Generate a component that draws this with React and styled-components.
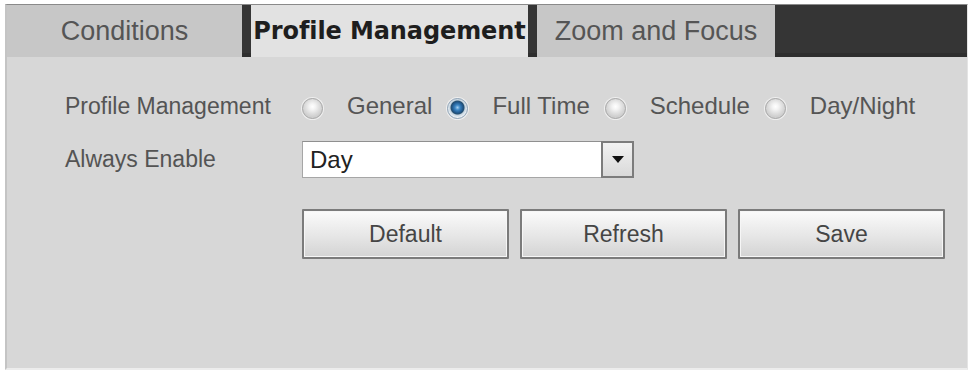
import React from "react";
import styled, { createGlobalStyle } from "styled-components";

const GlobalStyle = createGlobalStyle`
	html, body {
		margin: 0;
		padding: 0;
		background: #ffffff;
	}
	body {
		font-family: "Liberation Sans", Arial, sans-serif;
	}
`;

const Page = styled.div`
	width: 973px;
	height: 373px;
	padding: 4px 5px 3px 5px;
	box-sizing: border-box;
`;

const Panel = styled.div`
	height: 366px;
	display: flex;
	flex-direction: column;
	background: #d7d7d7;
	border-top: 1px solid #8a8a8a;
	border-left: 2px solid #c4c4c4;
	border-right: 1px solid #e4e4e4;
	border-bottom: 2px solid #ececec;
	box-sizing: border-box;
`;

const TabBar = styled.div`
	display: flex;
	gap: 9px;
	height: 52px;
	background: #353535;
	box-shadow: inset 0 -4px 0 #2e2e2e;
`;

const Tab = styled.div`
	width: ${(p) => p.$width}px;
	flex: none;
	display: flex;
	align-items: center;
	justify-content: center;
	white-space: nowrap;
	background: ${(p) => (p.$active ? "#e2e2e2" : "#c7c7c7")};
	color: ${(p) => (p.$active ? "#1e1e1e" : "#555555")};
	font-family: ${(p) =>
		p.$active
			? '"DejaVu Sans", Verdana, sans-serif'
			: '"Liberation Sans", Arial, sans-serif'};
	font-weight: ${(p) => (p.$active ? 700 : 400)};
	font-size: ${(p) => (p.$active ? 24 : 27)}px;
	letter-spacing: ${(p) => (p.$active ? "-0.1px" : "0")};
`;

const Body = styled.div`
	flex: 1;
	padding: 30px 0 0 58px;
	display: flex;
	flex-direction: column;
`;

const Row = styled.div`
	display: flex;
	align-items: center;
	height: ${(p) => p.$height}px;
	margin-bottom: ${(p) => p.$gap || 0}px;
`;

const Label = styled.div`
	width: 237px;
	flex: none;
	font-size: 23px;
	color: #545454;
`;

const RadioGroup = styled.div`
	display: flex;
	align-items: center;
`;

const Radio = styled.span`
	width: 21px;
	height: 21px;
	box-sizing: border-box;
	border-radius: 50%;
	margin: 5px 24px 0 0;
	border: 1.5px solid ${(p) => (p.$checked ? "#8fa4b8" : "#a9a9a9")};
	background: ${(p) =>
		p.$checked
			? "radial-gradient(circle at 50% 45%, #a6d0f0 0, #3c86c4 2.5px, #1f5588 5.5px, #27506f 6.5px, #c3d2de 7.5px, #eef2f5 10px)"
			: "radial-gradient(circle at 50% 40%, #ffffff 0, #f4f4f4 3px, #dedede 7px, #cfcfcf 10px)"};
	box-shadow: 0 0 0 1px rgba(255, 255, 255, 0.6);
`;

const RadioText = styled.span`
	font-size: 24px;
	color: #555555;
	margin-right: 15px;
	white-space: nowrap;
`;

const Select = styled.div`
	width: 332px;
	height: 37px;
	box-sizing: border-box;
	display: flex;
	background: #ffffff;
	border: 1px solid #a6a6a6;
	border-top-color: #8f8f8f;
`;

const SelectValue = styled.div`
	flex: 1;
	display: flex;
	align-items: center;
	padding-left: 7px;
	font-size: 24px;
	color: #222222;
`;

const SelectArrow = styled.div`
	width: 33px;
	flex: none;
	display: flex;
	align-items: center;
	justify-content: center;
	box-sizing: border-box;
	border: 2px solid #7c7c7c;
	margin: -1px -1px -1px 0;
	background: linear-gradient(#f2f2f2, #d9d9d9);

	&::after {
		content: "";
		border-left: 6px solid transparent;
		border-right: 6px solid transparent;
		border-top: 7px solid #111111;
	}
`;

const Buttons = styled.div`
	display: flex;
	gap: 11px;
	margin-left: 237px;
`;

const Button = styled.button`
	width: 207px;
	height: 50px;
	box-sizing: border-box;
	border: 2px solid #7b7b7b;
	border-radius: 1px;
	background: linear-gradient(#fbfbfb, #e6e6e6 55%, #d3d3d3);
	box-shadow: inset 0 0 0 1px #f6f6f6;
	font-family: "Liberation Sans", Arial, sans-serif;
	font-size: 23px;
	color: #454545;
	padding: 0;
`;

const modes = [
	{ label: "General", checked: false },
	{ label: "Full Time", checked: true },
	{ label: "Schedule", checked: false },
	{ label: "Day/Night", checked: false },
];

export default function App() {
	return (
		<>
			<GlobalStyle />
			<Page>
				<Panel>
					<TabBar>
						<Tab $width={235}>Conditions</Tab>
						<Tab $width={277} $active>
							Profile Management
						</Tab>
						<Tab $width={238}>Zoom and Focus</Tab>
					</TabBar>
					<Body>
						<Row $height={38} $gap={16}>
							<Label>Profile Management</Label>
							<RadioGroup>
								{modes.map((m) => (
									<React.Fragment key={m.label}>
										<Radio $checked={m.checked} />
										<RadioText>{m.label}</RadioText>
									</React.Fragment>
								))}
							</RadioGroup>
						</Row>
						<Row $height={37} $gap={31}>
							<Label>Always Enable</Label>
							<Select>
								<SelectValue>Day</SelectValue>
								<SelectArrow />
							</Select>
						</Row>
						<Buttons>
							<Button>Default</Button>
							<Button>Refresh</Button>
							<Button>Save</Button>
						</Buttons>
					</Body>
				</Panel>
			</Page>
		</>
	);
}
